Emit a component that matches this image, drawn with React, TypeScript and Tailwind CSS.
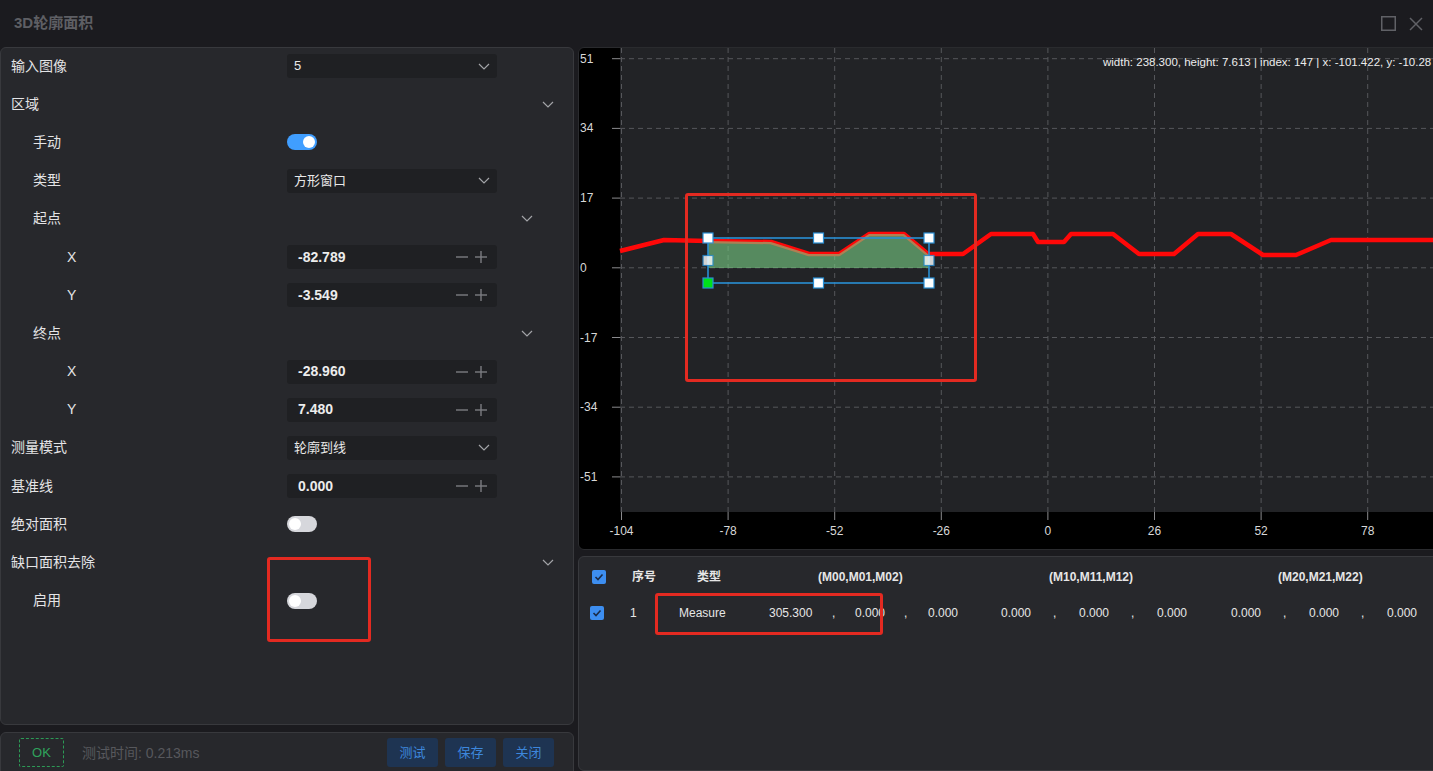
import { ReactNode } from "react";

// 3D轮廓面积 - 参数面板 + 轮廓图 + 结果表

const Chevron = ({ className = "" }: { className?: string }) => (
  <svg width="12" height="7" viewBox="0 0 12 7" className={className}>
    <polyline points="1,1 6,6 11,1" fill="none" stroke="#a3a4a8" strokeWidth="1.2" />
  </svg>
);

const Toggle = ({ on }: { on?: boolean }) => (
  <div
    className={`w-[30px] h-[16px] rounded-full flex items-center px-[2px] ${
      on ? "bg-[#409eff] justify-end" : "bg-[#d6d7dc] justify-start"
    }`}
  >
    <div className="w-[12px] h-[12px] rounded-full bg-white" />
  </div>
);

const Select = ({ value }: { value: string }) => (
  <div className="w-[210px] h-[24px] bg-[#1f2023] rounded-[3px] flex items-center pl-[7px] pr-[7px] text-[13px] text-[#e8e8e8]">
    <span>{value}</span>
    <Chevron className="ml-auto" />
  </div>
);

const NumberInput = ({ value }: { value: string }) => (
  <div className="w-[210px] h-[24px] bg-[#1f2023] rounded-[3px] flex items-center pl-[11px] pr-[10px] text-[14px] font-bold text-[#ececec]">
    <span>{value}</span>
    <div className="ml-auto flex items-center gap-[7px]">
      <svg width="12" height="12" viewBox="0 0 12 12">
        <line x1="0" y1="6" x2="12" y2="6" stroke="#7c7d82" strokeWidth="1.4" />
      </svg>
      <svg width="12" height="12" viewBox="0 0 12 12">
        <line x1="0" y1="6" x2="12" y2="6" stroke="#7c7d82" strokeWidth="1.4" />
        <line x1="6" y1="0" x2="6" y2="12" stroke="#7c7d82" strokeWidth="1.4" />
      </svg>
    </div>
  </div>
);

type RowProps = { label: string; level: 0 | 1 | 2; children?: ReactNode; chevron?: boolean };

const Row = ({ label, level, children, chevron }: RowProps) => {
  const pad = level === 0 ? "pl-[10px]" : level === 1 ? "pl-[32px]" : "pl-[66px]";
  return (
    <div className="flex items-center h-[38.2px]">
      <div className={`w-[286px] shrink-0 text-[14px] text-[#e4e4e6] ${pad}`}>{label}</div>
      {children}
      {chevron && <Chevron className={`ml-auto ${level === 0 ? "mr-[19px]" : "mr-[40px]"}`} />}
    </div>
  );
};

const Check = () => (
  <div className="w-[14px] h-[14px] rounded-[2px] bg-[#3d8ef0] flex items-center justify-center">
    <svg width="10" height="8" viewBox="0 0 10 8">
      <polyline points="1.5,4 4,6.5 8.5,1.5" fill="none" stroke="#1b2b46" strokeWidth="1.6" />
    </svg>
  </div>
);

// 轮廓数据 (像素坐标, 图表内部)
const profile =
  "41,203 85,192 129,193 192,194 230,206 260,206 290,186 325,186 349,206 384,206 412,186 454,186 459,194 485,194 492,186 534,186 560,206 595,206 619,186 652,186 684,207 717,207 752,192 870,192";
const fillArea = "129,220 129,193 192,194 230,206 260,206 290,186 325,186 350,207 350,220";

const xTicks = [-104, -78, -52, -26, 0, 26, 52, 78].map((v, i) => ({ v, x: 42.5 + i * 106.6 }));
const yTicks = [51, 34, 17, 0, -17, -34, -51].map((v, i) => ({ v, y: 10.7 + i * 69.7 }));

const handles = [
  [129, 190],
  [239.5, 190],
  [350, 190],
  [129, 212.5],
  [350, 212.5],
  [239.5, 235],
  [350, 235],
];

function Chart() {
  return (
    <div className="relative h-[503px] shrink-0 bg-black rounded-md border border-[#2a2b2e] overflow-hidden">
      <svg width="870" height="503" className="block">
        <rect x="41" y="0" width="829" height="464" fill="#222326" />
        {yTicks.map((t) => (
          <g key={t.v}>
            <line x1="41" y1={t.y} x2="870" y2={t.y} stroke="#56575b" strokeDasharray="5 4" />
            <line x1="33" y1={t.y} x2="41" y2={t.y} stroke="#8a8a8d" />
            <text x="1" y={t.y + 4} fontSize="12" fill="#d8d8d8" fontFamily="Liberation Sans, sans-serif">
              {t.v}
            </text>
          </g>
        ))}
        {xTicks.map((t) => (
          <g key={t.v}>
            <line x1={t.x} y1="0" x2={t.x} y2="464" stroke="#56575b" strokeDasharray="5 4" />
            <line x1={t.x} y1="464" x2={t.x} y2="472" stroke="#8a8a8d" />
            <text
              x={t.x}
              y="487"
              fontSize="12"
              fill="#d8d8d8"
              textAnchor="middle"
              fontFamily="Liberation Sans, sans-serif"
            >
              {t.v}
            </text>
          </g>
        ))}
        <polyline points={profile} fill="none" stroke="#ff0808" strokeWidth="4.5" strokeLinejoin="round" />
        <polygon points={fillArea} fill="#7acf85" opacity="0.6" />
        <rect x="129" y="190" width="221" height="45" fill="none" stroke="#2a8fd4" strokeWidth="1.6" />
        {handles.map(([x, y], i) => (
          <rect
            key={i}
            x={x - 5}
            y={y - 5}
            width="10"
            height="10"
            fill="#ffffff"
            opacity={y === 212.5 ? 0.8 : 1}
            stroke="#2a8fd4"
            strokeWidth="1.2"
          />
        ))}
        <rect x="124" y="230" width="10" height="10" fill="#00e01a" stroke="#2a8fd4" strokeWidth="1.2" />
      </svg>
      <div className="absolute top-[6px] left-[524px] whitespace-nowrap text-[11.5px] text-[#ececec]">
        width: 238.300, height: 7.613 | index: 147 | x: -101.422, y: -10.28
      </div>
    </div>
  );
}

const dataCells: [string, string][] = [
  ["1", "w-[49px]"],
  ["Measure", "w-[90px]"],
  ["305.300", "w-[63px]"],
  [",", "w-[23px]"],
  ["0.000", "w-[49px]"],
  [",", "w-[24px]"],
  ["0.000", "w-[73px]"],
  ["0.000", "w-[52px]"],
  [",", "w-[26px]"],
  ["0.000", "w-[52px]"],
  [",", "w-[26px]"],
  ["0.000", "w-[74px]"],
  ["0.000", "w-[52px]"],
  [",", "w-[26px]"],
  ["0.000", "w-[52px]"],
  [",", "w-[26px]"],
  ["0.000", "w-[60px]"],
];

function Table() {
  return (
    <div className="flex-1 bg-[#27282c] border border-[#38393d] rounded-md pt-[1px] text-[12px] text-[#e6e6e6]">
      <div className="flex items-center h-[38px] pl-[13px] font-bold">
        <div className="w-[40px] shrink-0">
          <Check />
        </div>
        <div className="w-[65px] shrink-0">序号</div>
        <div className="w-[121px] shrink-0">类型</div>
        <div className="w-[231px] shrink-0">(M00,M01,M02)</div>
        <div className="w-[229px] shrink-0">(M10,M11,M12)</div>
        <div className="w-[140px] shrink-0">(M20,M21,M22)</div>
      </div>
      <div className="flex items-center h-[34px] pl-[11px]">
        <div className="w-[40px] shrink-0">
          <Check />
        </div>
        {dataCells.map(([t, w], i) => (
          <div key={i} className={`${w} shrink-0`}>
            {t}
          </div>
        ))}
      </div>
    </div>
  );
}

export default function App() {
  return (
    <div className="relative w-[1433px] h-[771px] overflow-hidden bg-[#1b1b1f] font-['Liberation_Sans','Noto_Sans_CJK_SC',sans-serif]">
      {/* 标题栏 */}
      <div className="h-[47px] flex items-center pl-[14px] pr-[10px]">
        <span className="text-[15px] font-bold text-[#5e5f64]">3D轮廓面积</span>
        <div className="ml-auto flex items-center gap-[13px]">
          <svg width="15" height="15" viewBox="0 0 15 15">
            <rect x="0.75" y="0.75" width="13.5" height="13.5" fill="none" stroke="#606166" strokeWidth="1.5" />
          </svg>
          <svg width="14" height="14" viewBox="0 0 14 14">
            <line x1="1" y1="1" x2="13" y2="13" stroke="#606166" strokeWidth="1.5" />
            <line x1="13" y1="1" x2="1" y2="13" stroke="#606166" strokeWidth="1.5" />
          </svg>
        </div>
      </div>

      <div className="flex gap-[4px] h-[724px]">
        {/* 左侧参数 */}
        <div className="w-[574px] shrink-0 flex flex-col gap-[7px]">
          <div className="h-[678px] shrink-0 bg-[#27282c] border border-[#38393d] rounded-md">
            <div className="-mt-[1px]">
              <Row label="输入图像" level={0}>
                <Select value="5" />
              </Row>
              <Row label="区域" level={0} chevron />
              <Row label="手动" level={1}>
                <Toggle on />
              </Row>
              <Row label="类型" level={1}>
                <Select value="方形窗口" />
              </Row>
              <Row label="起点" level={1} chevron />
              <Row label="X" level={2}>
                <NumberInput value="-82.789" />
              </Row>
              <Row label="Y" level={2}>
                <NumberInput value="-3.549" />
              </Row>
              <Row label="终点" level={1} chevron />
              <Row label="X" level={2}>
                <NumberInput value="-28.960" />
              </Row>
              <Row label="Y" level={2}>
                <NumberInput value="7.480" />
              </Row>
              <Row label="测量模式" level={0}>
                <Select value="轮廓到线" />
              </Row>
              <Row label="基准线" level={0}>
                <NumberInput value="0.000" />
              </Row>
              <Row label="绝对面积" level={0}>
                <Toggle />
              </Row>
              <Row label="缺口面积去除" level={0} chevron />
              <Row label="启用" level={1}>
                <Toggle />
              </Row>
            </div>
          </div>
          <div className="h-[46px] shrink-0 bg-[#27282c] border border-[#38393d] rounded-md flex items-start pt-[5px] pl-[18px] pr-[19px]">
            <div className="w-[45px] h-[29px] border border-dashed border-[#2c9a56] rounded-[2px] flex items-center justify-center text-[13px] text-[#2fa35c]">
              OK
            </div>
            <div className="ml-[18px] h-[30px] flex items-center text-[14px] text-[#57585d]">测试时间: 0.213ms</div>
            <div className="ml-auto flex gap-[7px]">
              {["测试", "保存", "关闭"].map((b) => (
                <div
                  key={b}
                  className="w-[51px] h-[29px] rounded-[3px] bg-[#1e3452] flex items-center justify-center text-[13px] text-[#3d87dc]"
                >
                  {b}
                </div>
              ))}
            </div>
          </div>
        </div>

        {/* 右侧图表 + 表格 */}
        <div className="w-[870px] shrink-0 flex flex-col gap-[6px]">
          <Chart />
          <Table />
        </div>
      </div>

      {/* 标注框 */}
      <div className="absolute left-[267px] top-[557px] w-[104px] h-[85px] border-[3px] border-[#e32a21] rounded-[3px]" />
      <div className="absolute left-[685px] top-[193px] w-[292px] h-[189px] border-[3px] border-[#e32a21] rounded-[3px]" />
      <div className="absolute left-[655px] top-[593px] w-[228px] h-[42px] border-[3px] border-[#e32a21] rounded-[3px]" />
    </div>
  );
}
